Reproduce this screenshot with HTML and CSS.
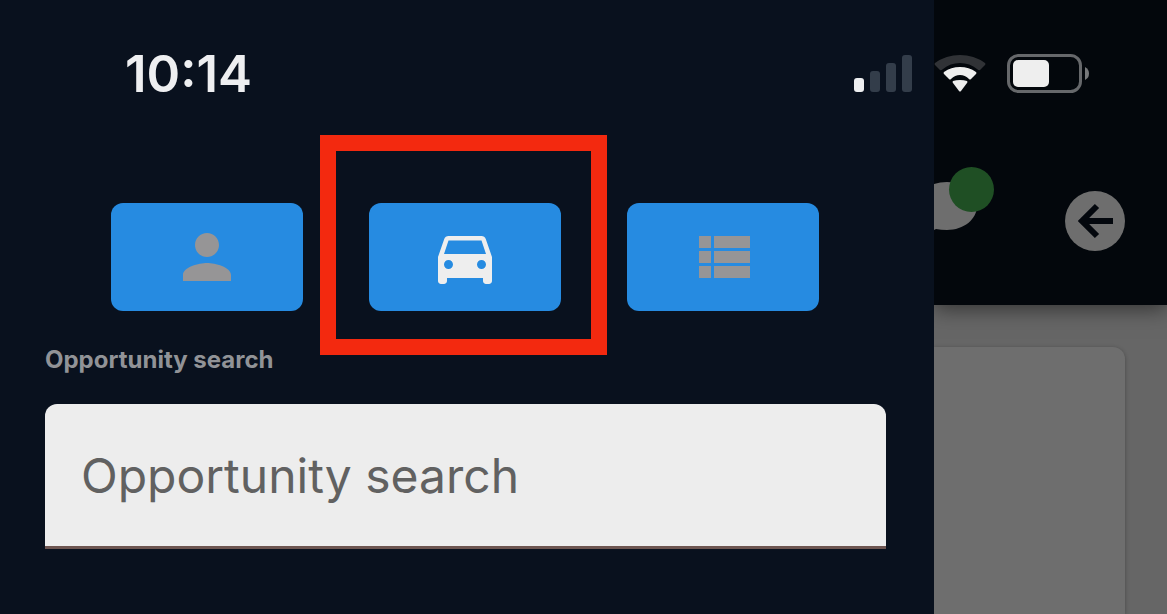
FILE: index.html
```html
<!DOCTYPE html>
<html lang="en">
<head>
<meta charset="utf-8">
<meta name="viewport" content="width=device-width, initial-scale=1">
<title>Opportunity search</title>
<link rel="stylesheet" href="styles.css">
</head>
<body class="app">
  <aside class="drawer">
    <div class="status">
      <time class="clock">10:14</time>
      <svg class="signal" viewBox="0 0 58 38" aria-hidden="true">
        <rect x="0" y="23" width="10" height="14" rx="3" fill="#eeeff1"/>
        <rect x="16" y="16" width="10" height="21" rx="3" fill="#333d4a"/>
        <rect x="32" y="8" width="10" height="29" rx="3" fill="#333d4a"/>
        <rect x="48" y="0" width="10" height="37" rx="3" fill="#333d4a"/>
      </svg>
    </div>
    <nav class="tabs">
      <button class="tab" type="button" aria-label="Customers">
        <svg class="tab-icon" viewBox="0 0 24 24"><path d="M12 12c2.21 0 4-1.79 4-4s-1.79-4-4-4-4 1.79-4 4 1.79 4 4 4zm0 2c-2.67 0-8 1.34-8 4v2h16v-2c0-2.66-5.33-4-8-4z"/></svg>
      </button>
      <div class="highlight">
        <button class="tab tab-active" type="button" aria-label="Vehicles">
          <svg class="tab-icon" viewBox="0 0 24 24"><path d="M18.92 6.01C18.72 5.42 18.16 5 17.5 5h-11c-.66 0-1.21.42-1.42 1.01L3 12v8c0 .55.45 1 1 1h1c.55 0 1-.45 1-1v-1h12v1c0 .55.45 1 1 1h1c.55 0 1-.45 1-1v-8l-2.08-5.99zM6.5 16c-.83 0-1.5-.67-1.5-1.5S5.67 13 6.5 13s1.5.67 1.5 1.5S7.33 16 6.5 16zm11 0c-.83 0-1.5-.67-1.5-1.5s.67-1.5 1.5-1.5 1.5.67 1.5 1.5-.67 1.5-1.5 1.5zM5 11l1.5-4.5h11L19 11H5z"/></svg>
        </button>
      </div>
      <button class="tab" type="button" aria-label="List">
        <svg class="tab-icon" viewBox="0 0 24 24"><path d="M4 14h4v-4H4v4zm0 5h4v-4H4v4zM4 9h4V5H4v4zm5 5h12v-4H9v4zm0 5h12v-4H9v4zM9 5v4h12V5H9z"/></svg>
      </button>
    </nav>
    <form class="search">
      <label class="search-label" for="search">Opportunity search</label>
      <input class="search-input" id="search" type="text" placeholder="Opportunity search">
    </form>
  </aside>
  <main class="page">
    <header class="topbar">
      <div class="device">
        <svg class="wifi" viewBox="0 0 52 38" aria-hidden="true">
          <path d="M1 11Q0 10 1 9Q12 1 26 1T51 9Q52 10 51 11L46 16Q45 17 43 15Q36 9 26 9T9 15Q7 17 6 16Z" fill="#303236"/>
          <path d="M10 20Q9 19 10 18Q17 13 26 13T42 18Q43 19 42 20L37 25Q36 26 35 25Q31 21 26 21T17 25Q16 26 15 25Z" fill="#eee"/>
          <path d="M19 29Q18 28 19 27Q22 26 26 26T33 27Q34 28 33 29L27 37Q26 38 25 37Z" fill="#eee"/>
        </svg>
        <svg class="battery" viewBox="0 0 82 40" aria-hidden="true">
          <rect x="1.5" y="1.5" width="72" height="36" rx="10" fill="none" stroke="#66686b" stroke-width="3"/>
          <rect x="6" y="6" width="36" height="27" rx="5" fill="#eee"/>
          <path d="M78 13Q82 15 82 19.500T78 26Z" fill="#77797b"/>
        </svg>
      </div>
      <div class="actions">
        <button class="icon-button" type="button" aria-label="Messages">
          <svg class="chat" viewBox="0 0 60 64">
            <path d="M0 17Q6 15 13 15C30 15 43 26 43 39S30 63 13 63Q7 63 2 62L0 63Z" fill="#6e6e6e"/>
            <circle cx="37.500" cy="22.500" r="22.500" fill="#1f4f24"/>
          </svg>
        </button>
        <button class="icon-button" type="button" aria-label="Back">
          <svg class="back" viewBox="0 0 60 60">
            <circle cx="30" cy="30" r="30" fill="#6e6e6e"/>
            <path d="M48 30H18M32 15L17 30L32 45" fill="none" stroke="#03070d" stroke-width="6"/>
          </svg>
        </button>
      </div>
    </header>
    <section class="card"></section>
  </main>
</body>
</html>
```
FILE: styles.css
```css
* {
  box-sizing: border-box;
}

.app {
  display: flex;
  min-height: 100vh;
  margin: 0;
  font-family: Inter, "Liberation Sans", sans-serif;
  background: #666;
}

.drawer {
  width: 80%;
  padding: 44px 48px 0 45px;
  background: #09111e;
}

.status {
  display: flex;
  align-items: center;
  justify-content: space-between;
  height: 60px;
  margin-right: -26px;
  padding-left: 80px;
}

.clock {
  font-size: 51px;
  font-weight: 600;
  line-height: 60px;
  color: #eeeff1;
}

.signal {
  width: 58px;
  height: 38px;
}

.tabs {
  display: flex;
  justify-content: center;
  gap: 66px;
  margin-top: 99px;
}

.tab {
  display: flex;
  align-items: center;
  justify-content: center;
  width: 192px;
  height: 108px;
  padding: 0;
  border: 0;
  border-radius: 12px;
  background: #268be1;
  color: #969596;
}

.tab-active {
  color: #eee;
}

.tab-icon {
  width: 72px;
  height: 72px;
  fill: currentColor;
}

.highlight {
  position: relative;
}

.highlight::after {
  content: "";
  position: absolute;
  inset: -68px -46px -44px -49px;
  border: 16px solid #f3290f;
  pointer-events: none;
}

.search {
  display: flex;
  flex-direction: column;
  gap: 28px;
  margin-top: 33px;
}

.search-label {
  font-size: 24px;
  font-weight: 700;
  line-height: 32px;
  color: #919397;
}

.search-input {
  width: 100%;
  height: 145px;
  padding: 0 36px;
  border: 0;
  border-bottom: 3px solid #6d5551;
  border-radius: 12px 12px 0 0;
  background: #ededed;
  color: #222;
  font: 400 48px Inter, "Liberation Sans", sans-serif;
}

.search-input::placeholder {
  color: #616161;
  opacity: 1;
}

.page {
  flex: 1;
  display: flex;
  flex-direction: column;
  gap: 42px;
  min-width: 0;
  overflow: hidden;
}

.topbar {
  height: 305px;
  padding-top: 54px;
  background: #03070c;
  box-shadow: 0 4px 20px rgba(0, 0, 0, 0.5);
}

.device {
  display: flex;
  gap: 21px;
}

.wifi {
  width: 52px;
  height: 38px;
}

.battery {
  width: 82px;
  height: 40px;
}

.actions {
  display: flex;
  align-items: flex-end;
  justify-content: space-between;
  margin-top: 73px;
  padding-right: 42px;
}

.icon-button {
  display: flex;
  padding: 0;
  border: 0;
  background: none;
}

.chat {
  width: 60px;
  height: 64px;
  margin-bottom: 20px;
}

.back {
  width: 60px;
  height: 60px;
}

.card {
  flex: 1;
  margin-right: 42px;
  border-radius: 0 12px 0 0;
  background: #6e6e6e;
  box-shadow: 0 1px 4px rgba(0, 0, 0, 0.3);
}
```
